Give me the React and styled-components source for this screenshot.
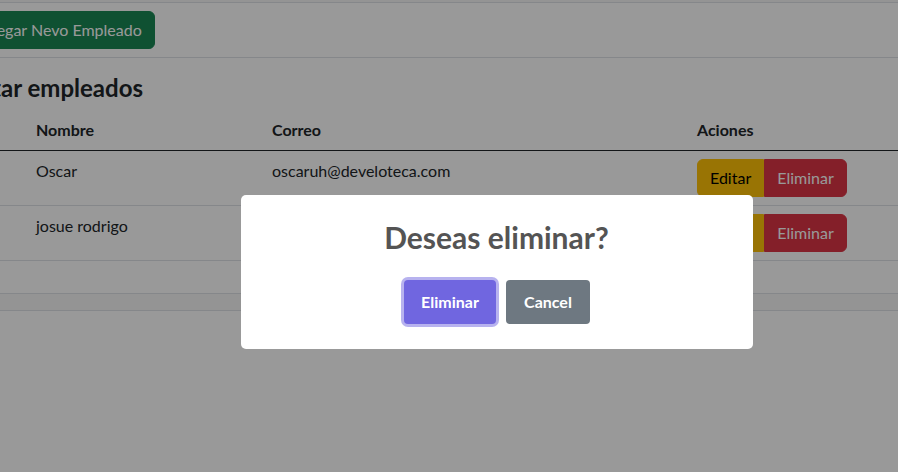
import styled, { createGlobalStyle } from 'styled-components';

const GlobalStyle = createGlobalStyle`
  body {
    margin: 0;
    background: #fff;
    color: #212529;
    font-family: Lato, "Noto Sans", "Liberation Sans", sans-serif;
    font-size: 16px;
    line-height: 1.5;
    overflow: hidden;
  }
  * { box-sizing: border-box; }
`;

const Page = styled.div`
  width: 1120px;
  margin-left: -54px;
`;

const TopStrip = styled.div`
  height: 3px;
  background: #f7f7f7;
  border-bottom: 1px solid #dee2e6;
`;

const Toolbar = styled.div`
  display: flex;
  padding: 8px 16px 8px 13px;
  border-bottom: 1px solid #dee2e6;
`;

const Btn = styled.button`
  font: inherit;
  line-height: 24px;
  padding: 6px 12px;
  border: 1px solid ${p => p.$bg};
  background: ${p => p.$bg};
  color: ${p => p.$color};
  border-radius: 6px;
  white-space: nowrap;
  cursor: pointer;
`;

const Card = styled.div`
  border-bottom: 1px solid #dee2e6;
`;

const CardBody = styled.div`
  padding: 16px 16px 16px 17px;
`;

const Title = styled.h4`
  margin: 0 0 8px;
  font-size: 24px;
  font-weight: 700;
  line-height: 28px;
`;

const Table = styled.table`
  width: 100%;
  border-collapse: collapse;
  table-layout: fixed;
  margin-bottom: 16px;

  th, td {
    padding: 8px;
    text-align: left;
    vertical-align: top;
    border-bottom: 1px solid #dee2e6;
  }

  thead th {
    font-weight: 700;
    border-bottom-color: #212529;
  }
`;

const BtnGroup = styled.div`
  display: inline-flex;

  & > button:first-child {
    border-top-right-radius: 0;
    border-bottom-right-radius: 0;
  }
  & > button:last-child {
    border-top-left-radius: 0;
    border-bottom-left-radius: 0;
  }
`;

const CardFooter = styled.div`
  height: 17px;
  background: #f7f7f7;
  border-top: 1px solid #dee2e6;
`;

const Overlay = styled.div`
  position: fixed;
  inset: 0;
  background: rgba(0, 0, 0, 0.4);
  display: flex;
  align-items: center;
  justify-content: center;
  padding: 72px 0 0 95px;
`;

const Popup = styled.div`
  width: 512px;
  background: #fff;
  border-radius: 5px;
  padding: 0 0 20px;
  display: grid;
  justify-items: center;
`;

const PopupTitle = styled.h2`
  margin: 0;
  padding: 24px 16px 0;
  font-size: 30px;
  line-height: 36px;
  font-weight: 700;
  color: #545454;
  text-align: center;
`;

const Actions = styled.div`
  display: flex;
  justify-content: center;
  margin-top: 20px;
`;

const SwalBtn = styled.button`
  font: inherit;
  font-weight: 700;
  line-height: 24px;
  margin: 5px;
  padding: 10px 17.6px;
  border: 0;
  border-radius: 4px;
  color: #fff;
  background: ${p => p.$bg};
  box-shadow: ${p => (p.$focus ? '0 0 0 3px rgba(112, 102, 224, 0.5)' : 'none')};
`;

const empleados = [
  { id: 1, nombre: 'Oscar', correo: 'oscaruh@develoteca.com' },
  { id: 2, nombre: 'josue rodrigo', correo: 'josue@develoteca.com' },
];

const App = () => (
  <>
    <GlobalStyle />
    <Page>
      <TopStrip />
      <Toolbar>
        <Btn $bg='#198754' $color='#fff'>Agregar Nevo Empleado</Btn>
      </Toolbar>
      <Card>
        <CardBody>
          <Title>Listar empleados</Title>
          <Table>
            <colgroup>
              <col style={{ width: 65 }} />
              <col style={{ width: 236 }} />
              <col style={{ width: 425 }} />
              <col />
            </colgroup>
            <thead>
              <tr>
                <th>ID</th>
                <th>Nombre</th>
                <th>Correo</th>
                <th>Aciones</th>
              </tr>
            </thead>
            <tbody>
              {empleados.map(e => (
                <tr key={e.id}>
                  <td>{e.id}</td>
                  <td>{e.nombre}</td>
                  <td>{e.correo}</td>
                  <td>
                    <BtnGroup>
                      <Btn $bg='#ffc107' $color='#000'>Editar</Btn>
                      <Btn $bg='#dc3545' $color='#fff'>Eliminar</Btn>
                    </BtnGroup>
                  </td>
                </tr>
              ))}
            </tbody>
          </Table>
        </CardBody>
        <CardFooter />
      </Card>
    </Page>
    <Overlay>
      <Popup>
        <PopupTitle>Deseas eliminar?</PopupTitle>
        <Actions>
          <SwalBtn $bg='#7066e0' $focus>Eliminar</SwalBtn>
          <SwalBtn $bg='#6e7881'>Cancel</SwalBtn>
        </Actions>
      </Popup>
    </Overlay>
  </>
);

export default App;
